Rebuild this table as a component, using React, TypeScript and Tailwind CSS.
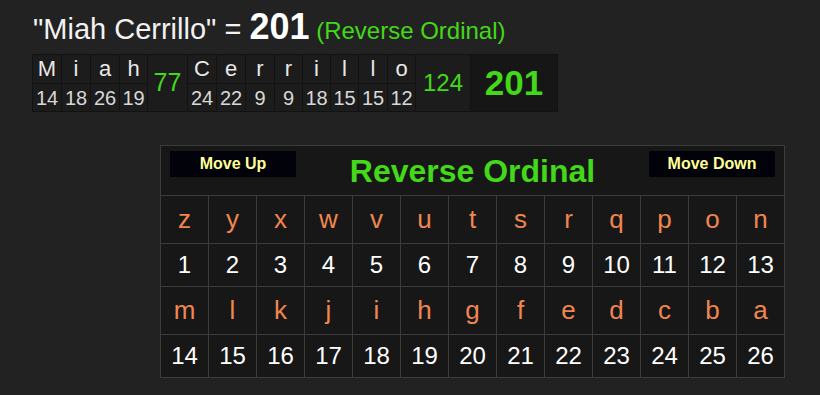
import React from "react";

const letters1 = [
  { ch: "M", n: 14, w: "w-[28px]" },
  { ch: "i", n: 18, w: "w-[28px]" },
  { ch: "a", n: 26, w: "w-[28px]" },
  { ch: "h", n: 19, w: "w-[27px]" },
];
const letters2 = [
  { ch: "C", n: 24, w: "w-[28px]" },
  { ch: "e", n: 22, w: "w-[28px]" },
  { ch: "r", n: 9, w: "w-[28px]" },
  { ch: "r", n: 9, w: "w-[27px]" },
  { ch: "i", n: 18, w: "w-[27px]" },
  { ch: "l", n: 15, w: "w-[27px]" },
  { ch: "l", n: 15, w: "w-[28px]" },
  { ch: "o", n: 12, w: "w-[27px]" },
];

const row1 = "zyxwvutsrqpon".split("");
const row2 = "mlkjihgfedcba".split("");

function LetterCol({ ch, n, w }: { ch: string; n: number; w: string }) {
  return (
    <div className={"flex flex-col gap-px " + w}>
      <div className="h-[28px] bg-[#1c1c1c] flex items-center justify-center text-[22px] leading-none text-[#e8e8e8]">
        {ch}
      </div>
      <div className="h-[27px] bg-[#1c1c1c] flex items-center justify-center text-[20px] leading-none text-[#d8d8d8]">
        {n}
      </div>
    </div>
  );
}

export default function App() {
  return (
    <div
      className="w-[820px] h-[395px] bg-[#222222] text-white overflow-hidden"
      style={{ fontFamily: '"Liberation Sans", Arial, sans-serif' }}
    >
      <div className="pl-[33px] pt-[9px] h-[54px] flex items-baseline whitespace-pre">
        <span className="text-[29px] leading-none text-[#f2f2f2]">"Miah Cerrillo" = </span>
        <span className="text-[36px] leading-none font-bold text-white">201</span>
        <span className="text-[24px] leading-none text-[#44d81a]"> (Reverse Ordinal)</span>
      </div>

      <div className="ml-[32px] flex w-fit bg-[#121212] p-px gap-px">
        {letters1.map((l, i) => (
          <LetterCol key={"a" + i} {...l} />
        ))}
        <div className="w-[39px] bg-[#1c1c1c] flex items-center justify-center text-[25px] text-[#44d81a]">
          77
        </div>
        {letters2.map((l, i) => (
          <LetterCol key={"b" + i} {...l} />
        ))}
        <div className="w-[54px] bg-[#1c1c1c] flex items-center justify-center text-[24px] text-[#44d81a]">
          124
        </div>
        <div className="w-[86px] bg-[#161616] flex items-center justify-center text-[35px] font-bold text-[#44d81a]">
          201
        </div>
      </div>

      <div className="ml-[160px] mt-[33px] w-fit border border-[#3c3c3c] bg-[#3c3c3c] flex flex-col gap-px">
        <div className="h-[49px] bg-[#171717] flex items-start justify-between px-[9px] pt-[5px] relative">
          <div className="w-[126px] h-[26px] bg-[#02020a] flex items-center justify-center text-[16px] font-bold text-[#ffff99]">
            Move Up
          </div>
          <div className="absolute left-0 right-0 top-[6px] text-center text-[32px] font-bold text-[#44d81a] leading-[38px]">
            Reverse Ordinal
          </div>
          <div className="w-[126px] h-[26px] bg-[#02020a] flex items-center justify-center text-[16px] font-bold text-[#ffff99] relative">
            Move Down
          </div>
        </div>
        <div className="grid grid-cols-[repeat(13,47px)] gap-px">
          {row1.map((c, i) => (
            <div key={"r1" + i} className="h-[47px] bg-[#171717] flex items-center justify-center text-[26px] text-[#ef8650]">
              {c}
            </div>
          ))}
          {row1.map((_, i) => (
            <div key={"n1" + i} className="h-[42px] bg-[#171717] flex items-center justify-center text-[24px] text-white">
              {i + 1}
            </div>
          ))}
          {row2.map((c, i) => (
            <div key={"r2" + i} className="h-[47px] bg-[#171717] flex items-center justify-center text-[26px] text-[#ef8650]">
              {c}
            </div>
          ))}
          {row2.map((_, i) => (
            <div key={"n2" + i} className="h-[42px] bg-[#171717] flex items-center justify-center text-[24px] text-white">
              {i + 14}
            </div>
          ))}
        </div>
      </div>
    </div>
  );
}
